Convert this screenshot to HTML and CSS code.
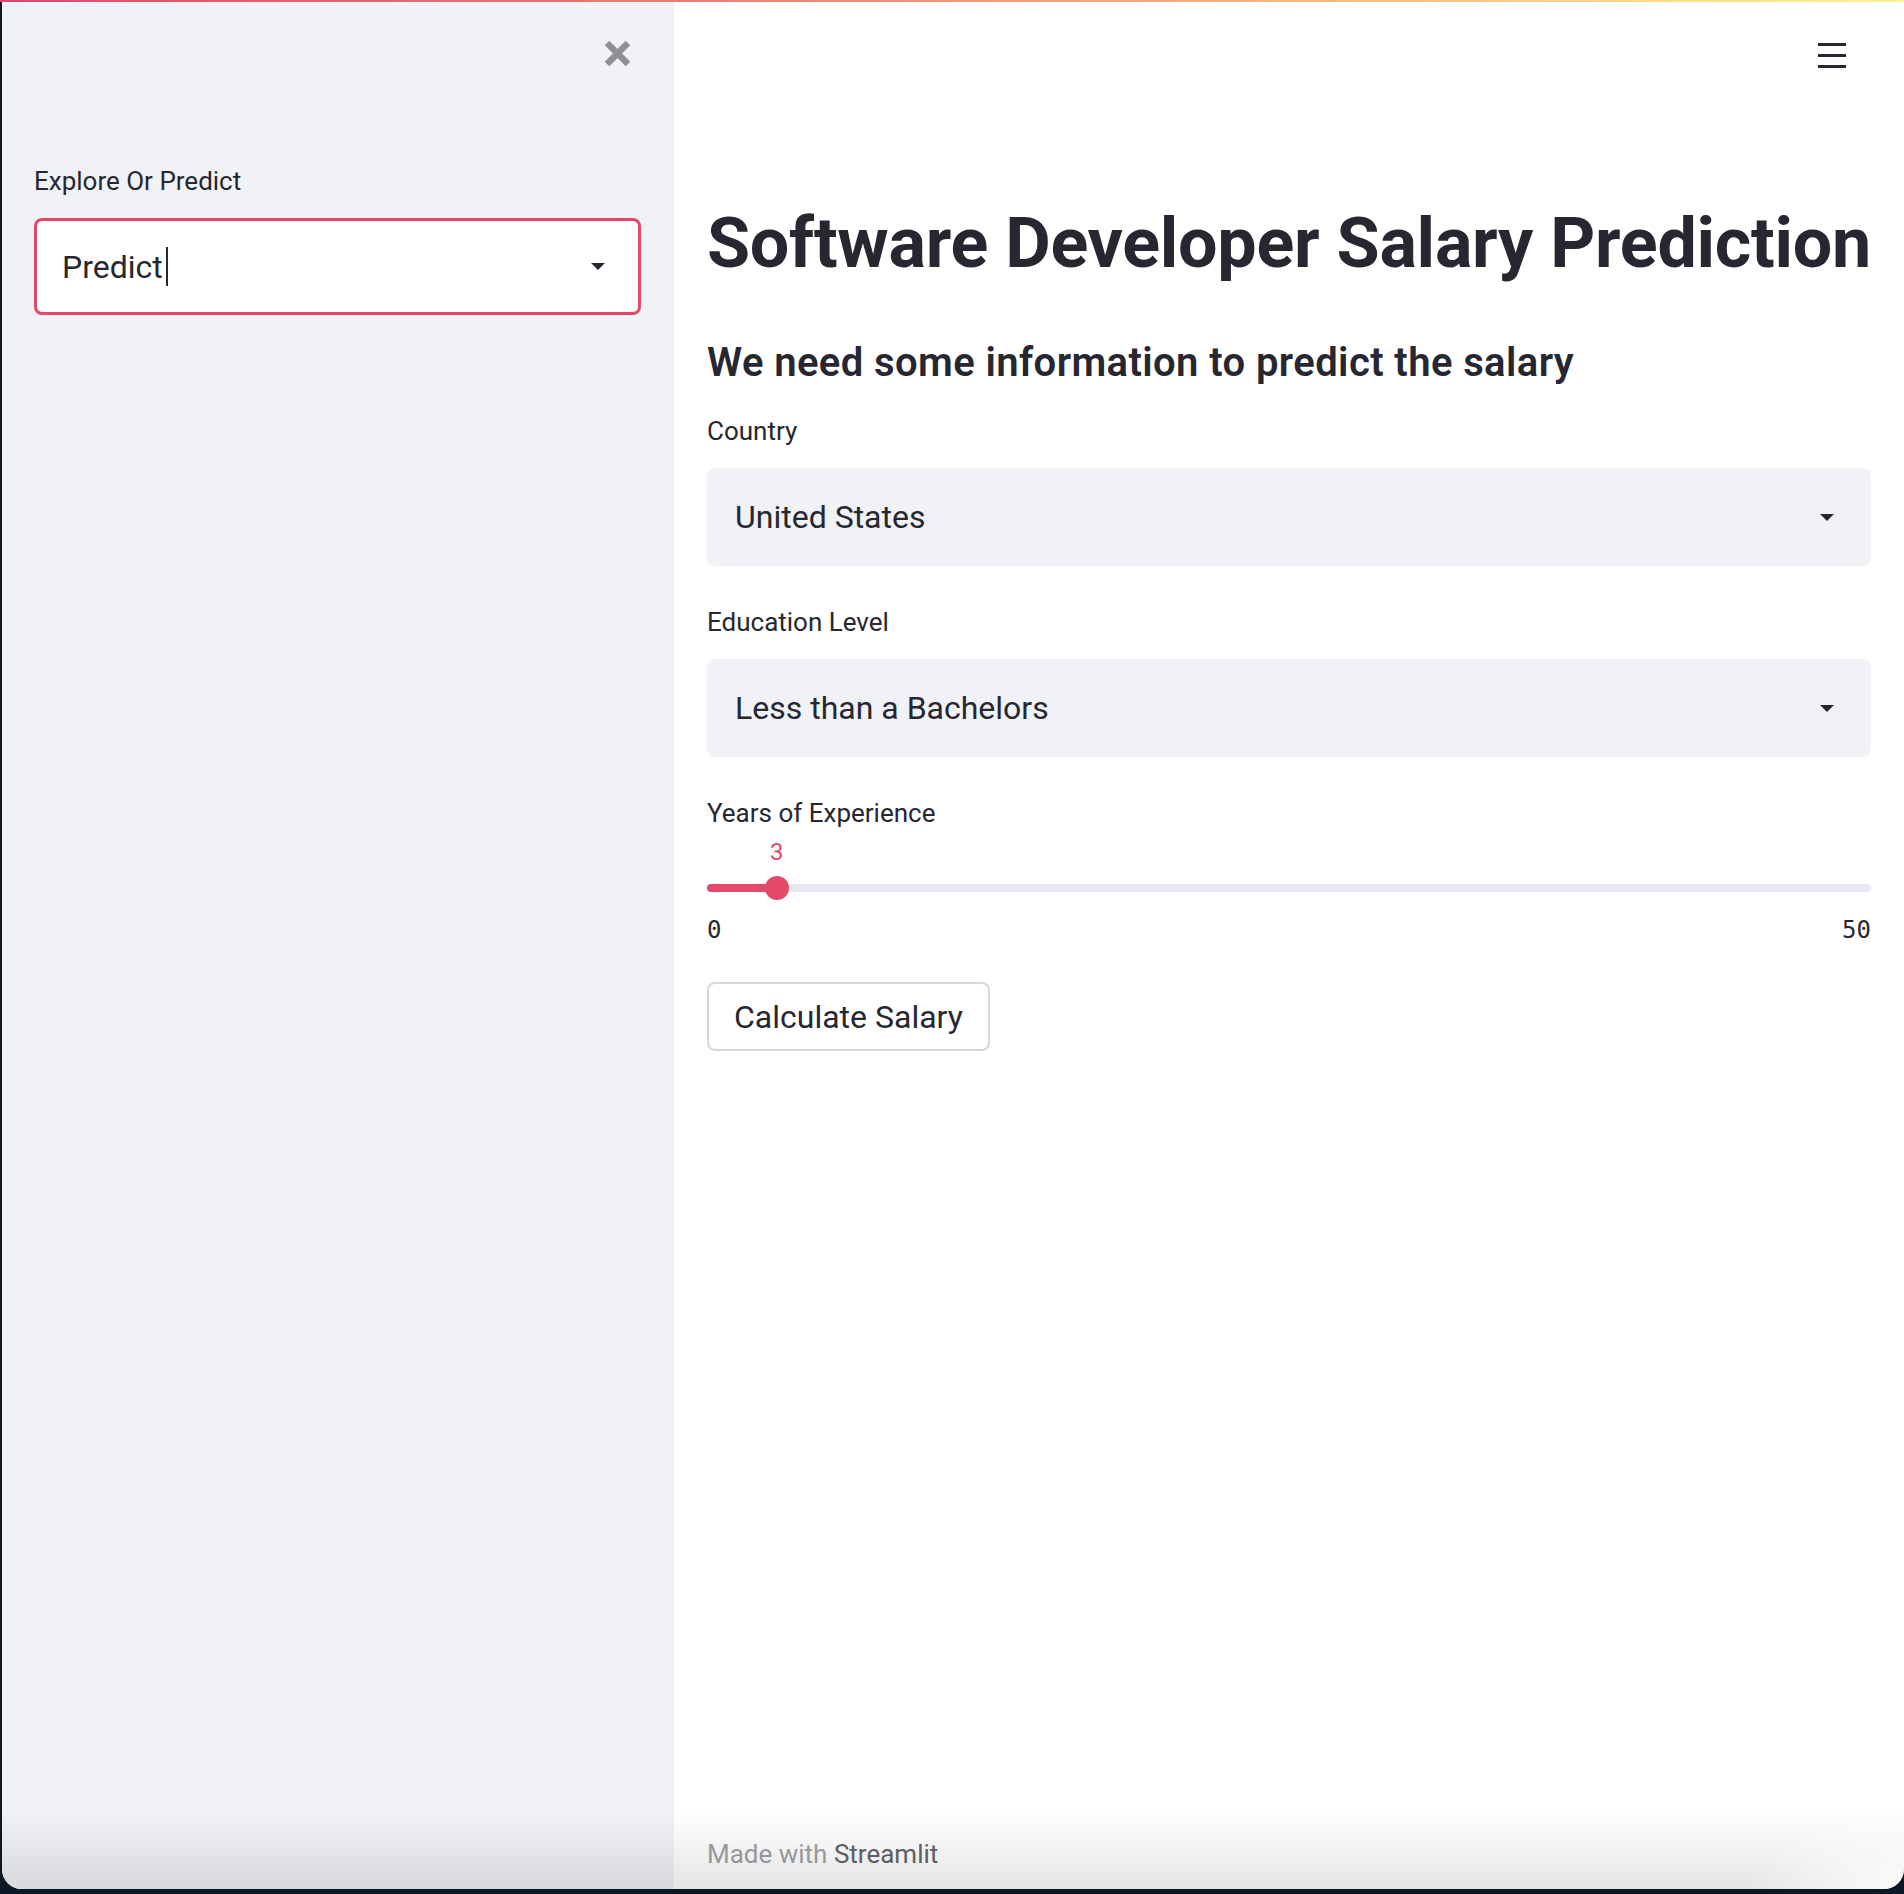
FILE: index.html
```html
<!DOCTYPE html>
<html lang="en">
<head>
<meta charset="utf-8">
<title>Software Developer Salary Prediction</title>
<link rel="stylesheet" href="styles.css">
</head>
<body>
<div class="decoration"></div>
<div class="window">
  <aside class="sidebar">
    <div class="sidebar-top">
      <button class="close-btn" aria-label="Close sidebar">
        <svg width="27" height="27" viewBox="0 0 27 27"><path d="M3 3 L24 24 M24 3 L3 24" stroke="#8f9095" stroke-width="6.5" fill="none"/></svg>
      </button>
    </div>
    <div class="widget sidebar-widget">
      <label class="label">Explore Or Predict</label>
      <div class="select select-focused">
        <span class="select-value">Predict<span class="caret"></span></span>
        <svg class="arrow" width="14" height="7" viewBox="0 0 14 7"><path d="M0 0 H14 L7 7 Z" fill="#262730"/></svg>
      </div>
    </div>
  </aside>
  <main class="main">
    <header class="main-header">
      <svg class="hamburger" width="28" height="25" viewBox="0 0 28 25"><rect x="0" y="0" width="28" height="3" fill="#262730"/><rect x="0" y="11" width="28" height="3" fill="#262730"/><rect x="0" y="22" width="28" height="3" fill="#262730"/></svg>
    </header>
    <div class="block">
      <h1 class="title">Software Developer Salary Prediction</h1>
      <h3 class="subheader">We need some information to predict the salary</h3>
      <div class="widget w-country">
        <label class="label">Country</label>
        <div class="select">
          <span class="select-value">United States</span>
          <svg class="arrow" width="14" height="7" viewBox="0 0 14 7"><path d="M0 0 H14 L7 7 Z" fill="#262730"/></svg>
        </div>
      </div>
      <div class="widget w-edu">
        <label class="label">Education Level</label>
        <div class="select">
          <span class="select-value">Less than a Bachelors</span>
          <svg class="arrow" width="14" height="7" viewBox="0 0 14 7"><path d="M0 0 H14 L7 7 Z" fill="#262730"/></svg>
        </div>
      </div>
      <div class="widget w-slider">
        <label class="label slider-label">Years of Experience</label>
        <div class="slider-value-row">
          <span class="slider-value" style="left: 6%;">3</span>
        </div>
        <div class="slider-track">
          <div class="track-bg"></div>
          <div class="track-fill" style="width: 6%;"></div>
          <div class="thumb" style="left: 6%;"></div>
        </div>
        <div class="ticks"><span>0</span><span>50</span></div>
      </div>
      <div class="button-row">
        <button class="btn">Calculate Salary</button>
      </div>
    </div>
    <footer class="footer">Made with <span class="footer-link">Streamlit</span></footer>
  </main>
</div>
</body>
</html>
```

FILE: styles.css
```css
* { box-sizing: border-box; }
html, body { margin: 0; padding: 0; }
body {
  width: 1904px;
  height: 1894px;
  overflow: hidden;
  background: #0d1826;
  font-family: Roboto, "Noto Sans", sans-serif;
  color: #262730;
}
.decoration {
  height: 2px;
  background: linear-gradient(90deg, #e4466b 0%, #ee7b73 36%, #fdf28e 100%);
}
.window {
  display: flex;
  height: 1887px;
  margin-left: 2px;
  border-radius: 0 0 20px 20px;
  overflow: hidden;
  position: relative;
  background: #ffffff;
}
.window::after {
  content: "";
  position: absolute;
  left: 0;
  right: 0;
  bottom: 0;
  height: 80px;
  pointer-events: none;
  background:
    radial-gradient(160px 90px at 100% 100%, rgba(255,255,255,0.85), rgba(255,255,255,0)),
    linear-gradient(to bottom, rgba(0,0,0,0), rgba(0,0,0,0.1));
}
.sidebar {
  flex: none;
  width: 672px;
  background: #f0f2f6;
  padding: 0 33px 0 32px;
}
.sidebar-top {
  display: flex;
  justify-content: flex-end;
  padding-top: 38px;
  padding-right: 10px;
}
.close-btn {
  display: block;
  width: 27px;
  height: 27px;
  padding: 0;
  border: 0;
  background: none;
}
.close-btn svg { display: block; }
.sidebar-widget { margin-top: 98px; }
.label {
  display: block;
  font-size: 26px;
  line-height: 32px;
  margin-bottom: 21px;
  color: #262730;
}
.select {
  display: flex;
  align-items: center;
  justify-content: space-between;
  height: 98px;
  border-radius: 8px;
  background: #f0f2f6;
  padding: 0 37px 0 28px;
  font-size: 32px;
  color: #262730;
}
.select-focused {
  background: #ffffff;
  border: 3px solid #e4486a;
  padding: 0 33px 0 25px;
  height: 97px;
}
.select-value {
  display: flex;
  align-items: center;
}
.caret {
  display: inline-block;
  width: 2px;
  height: 39px;
  margin-left: 3px;
  background: #262730;
}
.arrow { display: block; flex: none; }

.main {
  flex: 1;
  display: flex;
  flex-direction: column;
  padding: 0 33px;
  min-width: 0;
}
.main-header {
  display: flex;
  justify-content: flex-end;
  height: 70px;
  padding-top: 41px;
  padding-right: 25px;
}
.hamburger { display: block; }
.block { padding-top: 129px; }
.title {
  margin: 0;
  font-size: 70px;
  line-height: 84px;
  font-weight: 700;
  letter-spacing: -0.25px;
  white-space: nowrap;
  color: #262730;
}
.subheader {
  margin: 54px 0 0;
  font-size: 40px;
  line-height: 48px;
  font-weight: 600;
  letter-spacing: 0.4px;
  color: #262730;
}
.w-country { margin-top: 28px; }
.w-edu { margin-top: 40px; }
.w-slider { margin-top: 40px; }
.slider-label { margin-bottom: 9px; }
.slider-value-row {
  position: relative;
  height: 28px;
}
.slider-value {
  position: absolute;
  top: 0;
  transform: translateX(-50%);
  font-size: 24px;
  line-height: 28px;
  color: #e4486a;
}
.slider-track {
  position: relative;
  height: 24px;
  margin-top: 10px;
}
.track-bg {
  position: absolute;
  left: 0;
  right: 0;
  top: 8px;
  height: 8px;
  border-radius: 4px;
  background: #e6e9ef;
}
.track-fill {
  position: absolute;
  left: 0;
  top: 8px;
  height: 8px;
  border-radius: 4px 0 0 4px;
  background: #e4486a;
}
.thumb {
  position: absolute;
  top: 0;
  width: 24px;
  height: 24px;
  margin-left: -12px;
  border-radius: 50%;
  background: #e4486a;
}
.ticks {
  display: flex;
  justify-content: space-between;
  margin-top: 16px;
  font-family: "DejaVu Sans Mono", "Liberation Mono", monospace;
  font-size: 24px;
  line-height: 28px;
  color: #262730;
}
.button-row { margin-top: 38px; }
.btn {
  display: inline-flex;
  align-items: center;
  height: 69px;
  padding: 0 25px;
  border: 2px solid #d7d8db;
  border-radius: 8px;
  background: #ffffff;
  font-family: Roboto, "Noto Sans", sans-serif;
  font-size: 32px;
  color: #262730;
}
.footer {
  margin-top: auto;
  padding-bottom: 20px;
  font-size: 26px;
  line-height: 30px;
  color: #a0a1a6;
}
.footer-link { color: #62636a; }
```
